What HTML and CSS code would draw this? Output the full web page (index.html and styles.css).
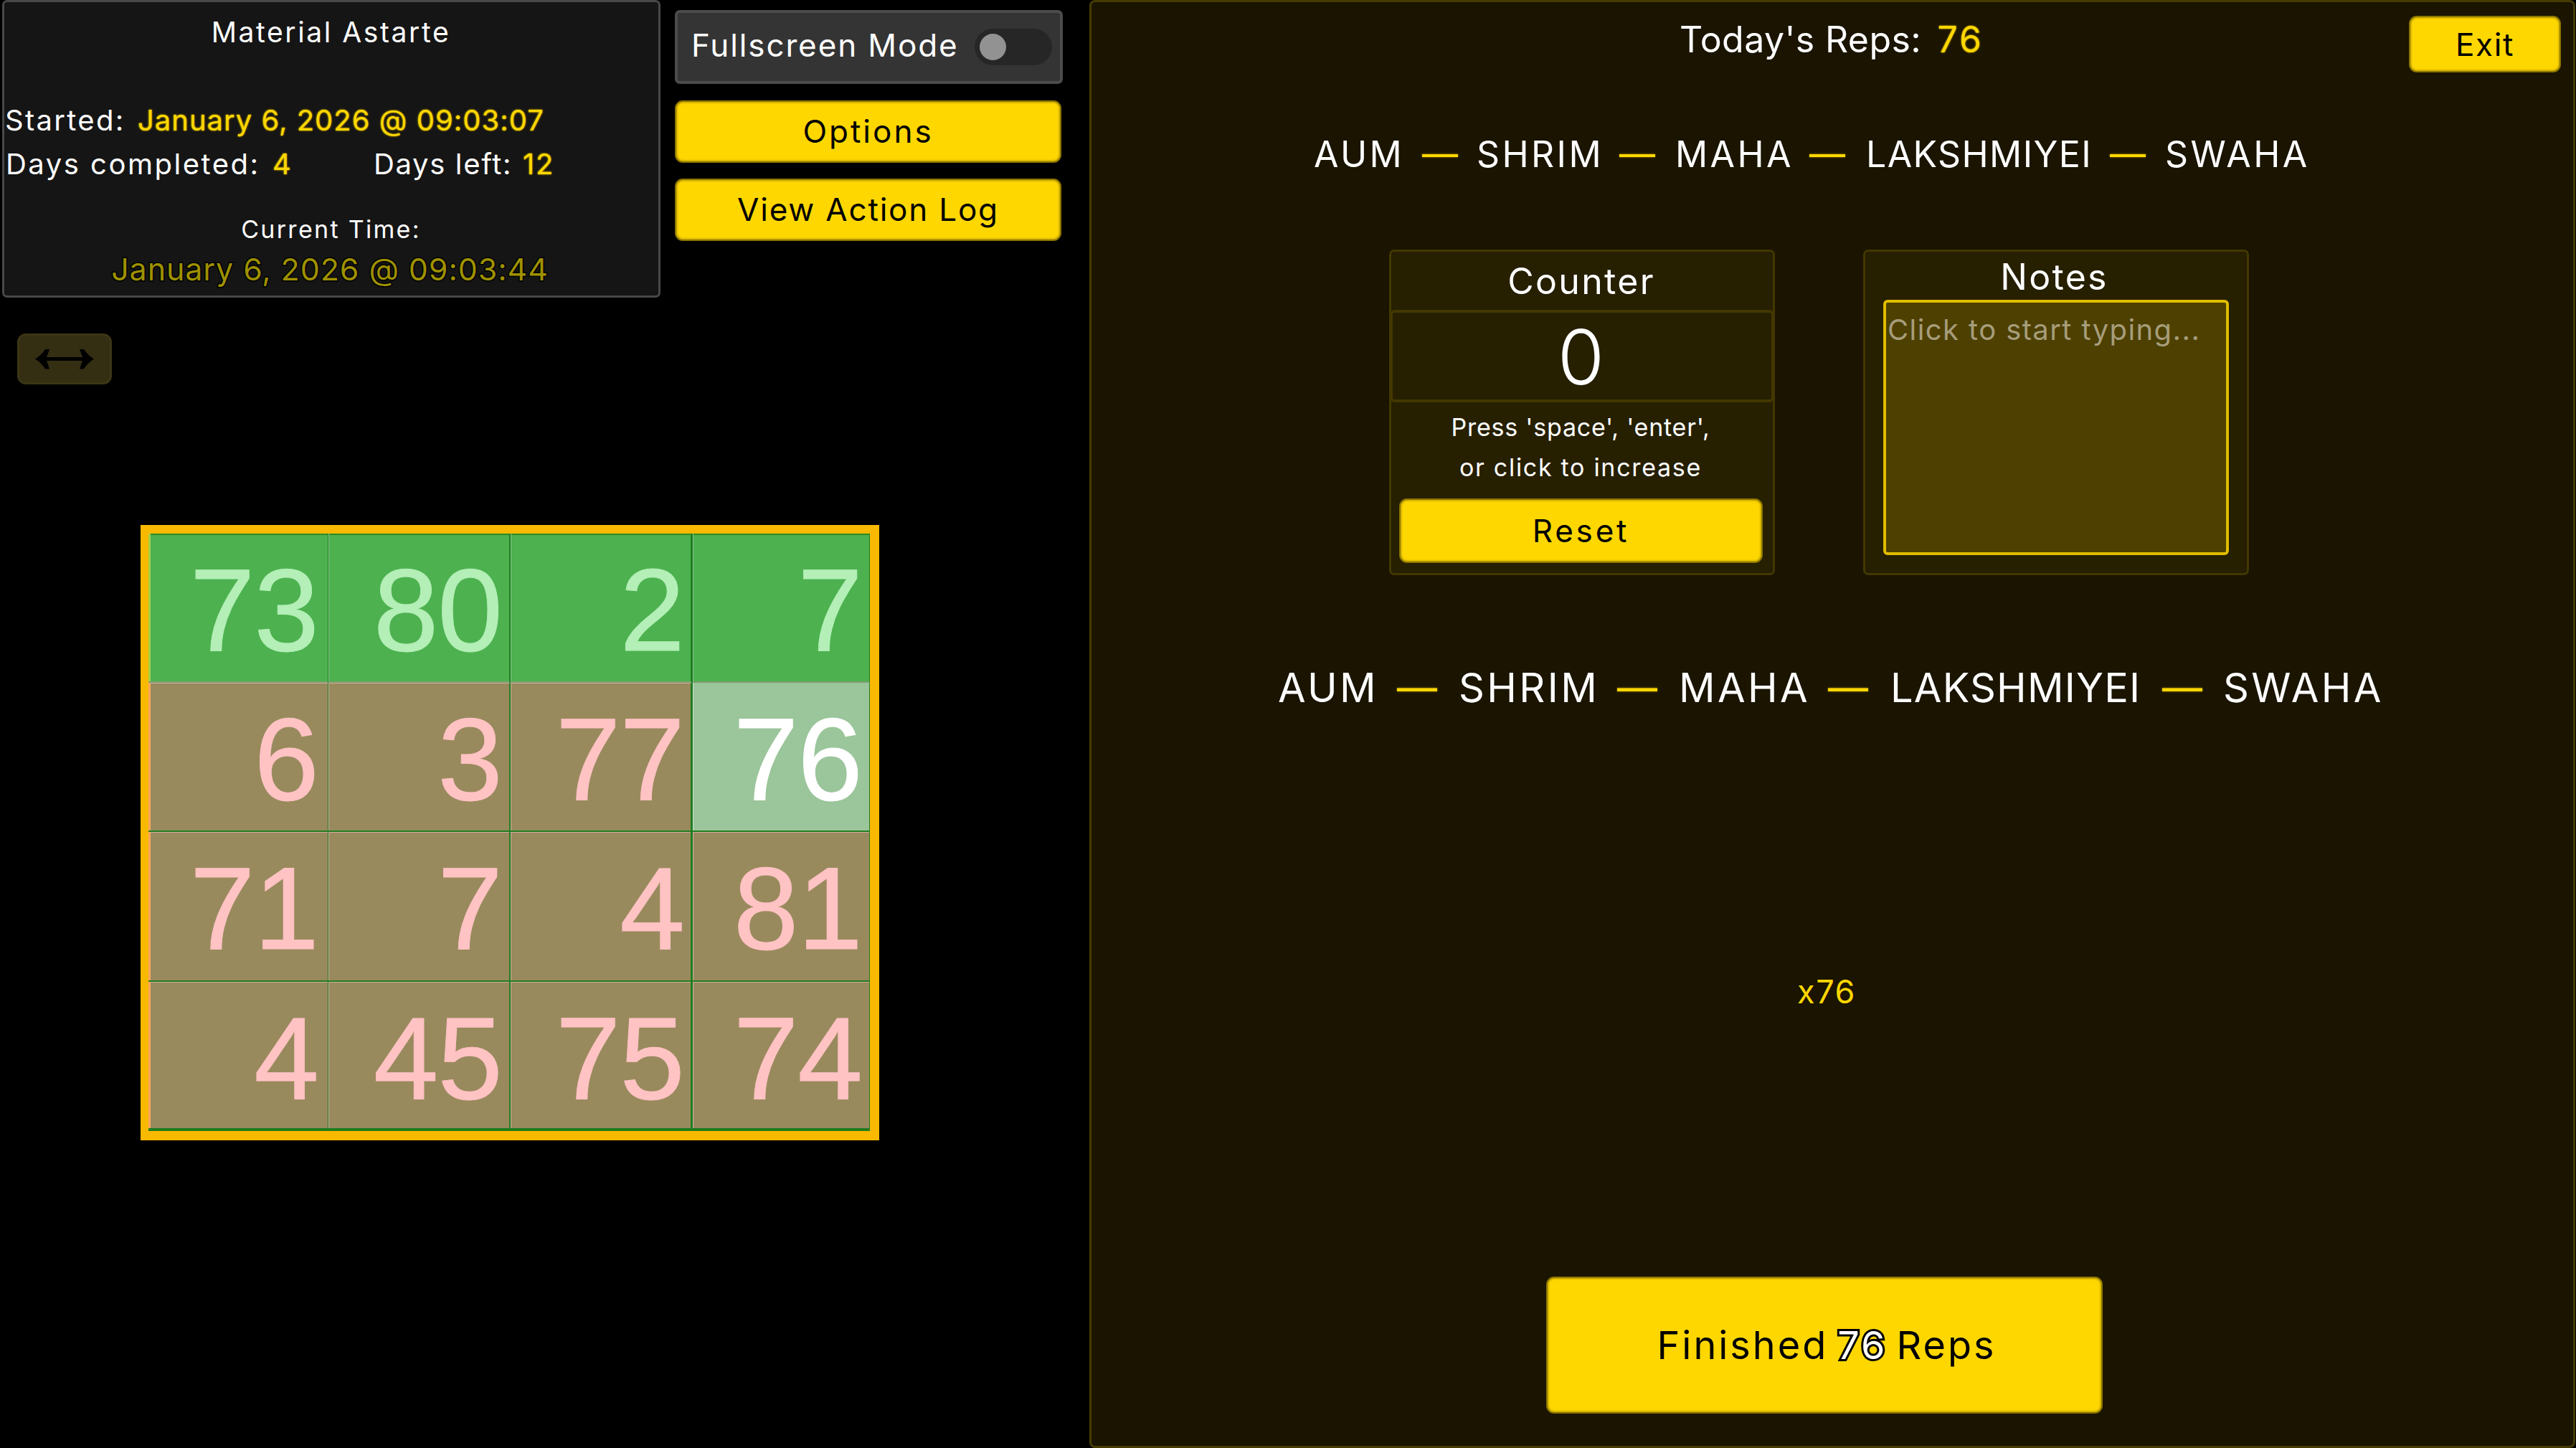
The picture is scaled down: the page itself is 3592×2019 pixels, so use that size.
FILE: index.html
```
<!DOCTYPE html>
<html lang="en">
<head>
    <meta charset="UTF-8">
    <meta name="viewport" content="width=device-width, initial-scale=1.0">
    <title>Material Astarte</title>
    <link rel="stylesheet" href="styles.css">
</head>
<body>
    <div class="left">
        <div class="top">
            <div class="info">
                <div class="title">Material Astarte</div>
                <div class="row started">
                    <span class="label">Started:</span>
                    <span class="gold">January 6, 2026 @ 09:03:07</span>
                </div>
                <div class="row days">
                    <span class="label">Days completed:</span>
                    <span class="gold">4</span>
                    <span class="label">Days left:</span>
                    <span class="gold">12</span>
                </div>
                <div class="currentLabel">Current Time:</div>
                <div class="currentTime">January 6, 2026 @ 09:03:44</div>
            </div>
            <div class="controls">
                <div class="fullscreen">
                    <span>Fullscreen Mode</span>
                    <div class="toggle"><div class="knob"></div></div>
                </div>
                <button class="button options">Options</button>
                <button class="button log">View Action Log</button>
            </div>
        </div>
        <button class="resize">
            <svg width="84" height="30" viewBox="0 0 84 30">
                <path d="M1 14.500 Q10 9 15 1 H21 L17 12 H67 L63 1 H69 Q74 9 83 14.500 Q74 20 69 28.500 H63 L67 17 H17 L21 28.500 H15 Q10 20 1 14.500 Z"/>
            </svg>
        </button>
        <!-- Yantra square -->
        <div class="board">
            <div class="cell done">73</div>
            <div class="cell done">80</div>
            <div class="cell done">2</div>
            <div class="cell done">7</div>
            <div class="cell">6</div>
            <div class="cell">3</div>
            <div class="cell">77</div>
            <div class="cell active">76</div>
            <div class="cell">71</div>
            <div class="cell">7</div>
            <div class="cell">4</div>
            <div class="cell">81</div>
            <div class="cell">4</div>
            <div class="cell">45</div>
            <div class="cell">75</div>
            <div class="cell">74</div>
        </div>
    </div>

    <div class="right">
        <div class="header">
            <div class="reps">Today's Reps: <span class="gold">76</span></div>
            <button class="button exit">Exit</button>
        </div>
        <div class="mantra small">
            <span>AUM</span><i>—</i><span>SHRIM</span><i>—</i><span>MAHA</span><i>—</i><span class="long">LAKSHMIYEI</span><i>—</i><span>SWAHA</span>
        </div>
        <div class="cards">
            <div class="card counter">
                <div class="cardTitle">Counter</div>
                <div class="count">0</div>
                <div class="hint">
                    <div class="press">Press 'space', 'enter',</div>
                    <div>or click to increase</div>
                </div>
                <button class="button reset">Reset</button>
            </div>
            <div class="card notes">
                <div class="cardTitle">Notes</div>
                <div class="noteBox">Click to start typing...</div>
            </div>
        </div>
        <div class="mantra large">
            <span>AUM</span><i>—</i><span>SHRIM</span><i>—</i><span>MAHA</span><i>—</i><span class="long">LAKSHMIYEI</span><i>—</i><span>SWAHA</span>
        </div>
        <div class="times">x76</div>
        <button class="button finished"><span>Finished</span><span class="outlined">76</span><span>Reps</span></button>
    </div>
</body>
</html>
```

FILE: styles.css
```
* {
    box-sizing: border-box;
}
body {
    margin: 0;
    width: 3592px;
    height: 2019px;
    display: flex;
    overflow: hidden;
    background: #000;
    color: #fff;
    font-family: Inter, sans-serif;
    white-space: nowrap;
}
.left {
    width: 1519px;
}
.right {
    width: 2072px;
    height: 2019px;
    padding: 1px;
    background: #1a1400;
    border: 3px solid #463b00;
    border-radius: 8px;
}
.gold {
    color: #ffd700;
    text-shadow: 0 0 2px #c9aa00, 0 0 3px #806c00;
}

/* buttons */
.button {
    display: block;
    margin: 0;
    padding: 0;
    background: #ffd700;
    color: #000;
    font-family: inherit;
    font-size: 44px;
    border: 2px solid #8d7700;
    border-radius: 11px;
    box-shadow: inset 0 0 3px 1px #b39600;
}

/* top left */
.top {
    display: flex;
    gap: 20px;
    padding-left: 3px;
}
.info {
    width: 918px;
    height: 415px;
    padding: 0 2px 0 1px;
    background: #151515;
    border: 3px solid #484848;
    border-radius: 7px;
    font-size: 40px;
}
.title {
    height: 83px;
    line-height: 83px;
    font-size: 39px;
    letter-spacing: 2.6px;
    text-align: center;
}
.row {
    display: flex;
    height: 61px;
    line-height: 61px;
}
.started {
    margin-top: 51px;
}
.started .label {
    width: 185px;
    letter-spacing: 2.3px;
}
.started .gold {
    letter-spacing: 1px;
}
.days .label {
    width: 373px;
    padding-left: 1px;
    letter-spacing: 2.5px;
}
.days .gold {
    width: 140px;
    letter-spacing: 1.7px;
}
.days .gold + .label {
    width: 209px;
    letter-spacing: 1.65px;
}
.currentLabel {
    margin-top: 35px;
    line-height: 52px;
    font-size: 34px;
    letter-spacing: 2.3px;
    text-align: center;
}
.currentTime {
    line-height: 59px;
    padding-right: 3px;
    font-size: 43px;
    letter-spacing: 0.9px;
    text-align: center;
    color: #9f9100;
    -webkit-text-stroke: 3px #000;
    paint-order: stroke fill;
}
.controls {
    padding-top: 14px;
}
.fullscreen {
    display: flex;
    align-items: center;
    justify-content: space-between;
    width: 541px;
    height: 103px;
    padding: 0 11px 0 19px;
    background: #343434;
    border: 4px solid #4c4c4c;
    border-radius: 7px;
    font-size: 44px;
    letter-spacing: 1.87px;
}
.fullscreen span {
    padding-bottom: 6px;
}
.toggle {
    width: 108px;
    height: 51px;
    padding: 7px;
    background: #262626;
    border-radius: 26px;
}
.knob {
    width: 37px;
    height: 37px;
    background: #929292;
    border-radius: 50%;
}
.options, .log {
    width: 539px;
    height: 87px;
    margin-top: 22.5px;
    padding-bottom: 1px;
    letter-spacing: 3px;
}
.log {
    letter-spacing: 1.8px;
}
.resize {
    display: flex;
    align-items: center;
    justify-content: center;
    width: 132px;
    height: 71px;
    margin: 50px 0 0 24px;
    padding: 0;
    background: #342e13;
    border: 3px solid #3c3616;
    border-radius: 12px;
}

/* number square */
.board {
    display: grid;
    grid-template-columns: 251px 254px 254px 247px;
    grid-template-rows: 208px 208px 209px 208px;
    width: 1030px;
    height: 858px;
    margin: 196px 0 0 196px;
    border: solid #f9b900;
    border-width: 12px 13px 13px 11px;
}
.cell {
    padding-right: 9px;
    background: #998a5e;
    border: solid #1f7d20;
    border-width: 0 2px 2px 0;
    box-shadow: inset 1px 1px #d3ae9c;
    color: #ffc3c3;
    font-family: "Liberation Sans", sans-serif;
    font-size: 163px;
    line-height: 214px;
    letter-spacing: -1px;
    text-align: right;
    -webkit-text-stroke: 1px;
}
.cell.done {
    background: #4db150;
    border-bottom: 2px solid #7c9e6e;
    box-shadow: inset 1px 0 #8cc58c, inset 0 2px #2f8a20;
    color: #b3efb6;
}
.cell.active {
    background: #9bc59b;
    box-shadow: inset 1px 0 #d5e4d5;
    color: #fff;
}
.cell:nth-child(4n+1) {
    padding-right: 13px;
    border-right-width: 1px;
    box-shadow: inset 3px 0 #fda65c, inset 0 1px #d3ae9c;
}
.cell:nth-child(4n+2) {
    padding-right: 10px;
}
.cell:nth-child(4n+3) {
    border-right-width: 3px;
}
.cell:nth-child(4n) {
    border-right-width: 1px;
    padding-right: 10px;
}
.cell:nth-child(n+13) {
    border-bottom-width: 4px;
}
.cell.done:nth-child(4n+1) {
    box-shadow: inset 3px 0 #a9d04a, inset 0 2px #2f8a20;
}

/* right panel */
.header {
    display: grid;
    grid-template-columns: 1fr auto 1fr;
    height: 102px;
}
.reps {
    grid-column: 2;
    line-height: 102px;
    padding-right: 2px;
    font-size: 50px;
    letter-spacing: 0.4px;
}
.reps .gold {
    margin-left: 8px;
    letter-spacing: 3px;
}
.exit {
    justify-self: end;
    width: 212px;
    height: 79px;
    margin: 18px 16px 0 0;
    letter-spacing: 1.6px;
}
.mantra {
    display: grid;
}
.mantra i {
    font-style: normal;
    color: #ffd700;
    text-shadow: 0 0 3px #a08700;
}
.small {
    grid-template-columns: 151px 76px 199px 78px 187px 79px 340px 77px auto;
    margin: 79px 0 0 309px;
    line-height: 60px;
    font-size: 50px;
    letter-spacing: 3.4px;
}
.small .long {
    letter-spacing: 1.4px;
}
.large {
    grid-template-columns: 166px 86px 221px 86px 208px 87px 379px 85px auto;
    margin: 117px 0 0 259px;
    line-height: 80px;
    font-size: 56px;
    letter-spacing: 3.4px;
}
.large .long {
    letter-spacing: 1.2px;
}
.cards {
    display: flex;
    gap: 123px;
    margin: 103px 0 0 414px;
}
.card {
    width: 538px;
    height: 454px;
    padding: 1px;
    background: #261f00;
    border: 3px solid #433800;
    border-radius: 7px;
}
.cardTitle {
    height: 80px;
    line-height: 80px;
    padding-right: 2px;
    font-size: 50px;
    letter-spacing: 2.3px;
    text-align: center;
}
.count {
    height: 129px;
    margin: 0 -3px;
    padding-right: 3px;
    line-height: 123px;
    border: 4px solid #433800;
    border-radius: 7px;
    font-size: 106px;
    font-weight: 300;
    text-align: center;
}
.hint {
    margin-top: 7px;
    line-height: 56px;
    padding-right: 4px;
    font-size: 34px;
    letter-spacing: 1.7px;
    text-align: center;
}
.press {
    letter-spacing: 0.77px;
}
.reset {
    width: 507px;
    height: 90px;
    margin: 15px 0 0 10px;
    letter-spacing: 3.8px;
}
.notes .cardTitle {
    height: 66px;
    line-height: 68px;
    padding-right: 5px;
}
.noteBox {
    width: 482px;
    height: 356px;
    margin-left: 24px;
    padding-left: 2px;
    background: #4d4000;
    border: 4px solid #dfbc00;
    border-radius: 6px;
    color: #a69d7b;
    font-size: 40px;
    line-height: 75px;
    letter-spacing: 1.4px;
}
.times {
    margin: 354px 16px 0 0;
    line-height: 60px;
    font-size: 45px;
    letter-spacing: 1.6px;
    text-align: center;
    color: #ffd700;
}
.finished {
    display: flex;
    align-items: center;
    justify-content: center;
    gap: 13px;
    width: 776px;
    height: 191px;
    margin: 367px 0 0 633px;
    padding-left: 6px;
    font-size: 54px;
    letter-spacing: 3px;
}
.outlined {
    color: #fff;
    -webkit-text-stroke: 6px #000;
    paint-order: stroke fill;
}
```
